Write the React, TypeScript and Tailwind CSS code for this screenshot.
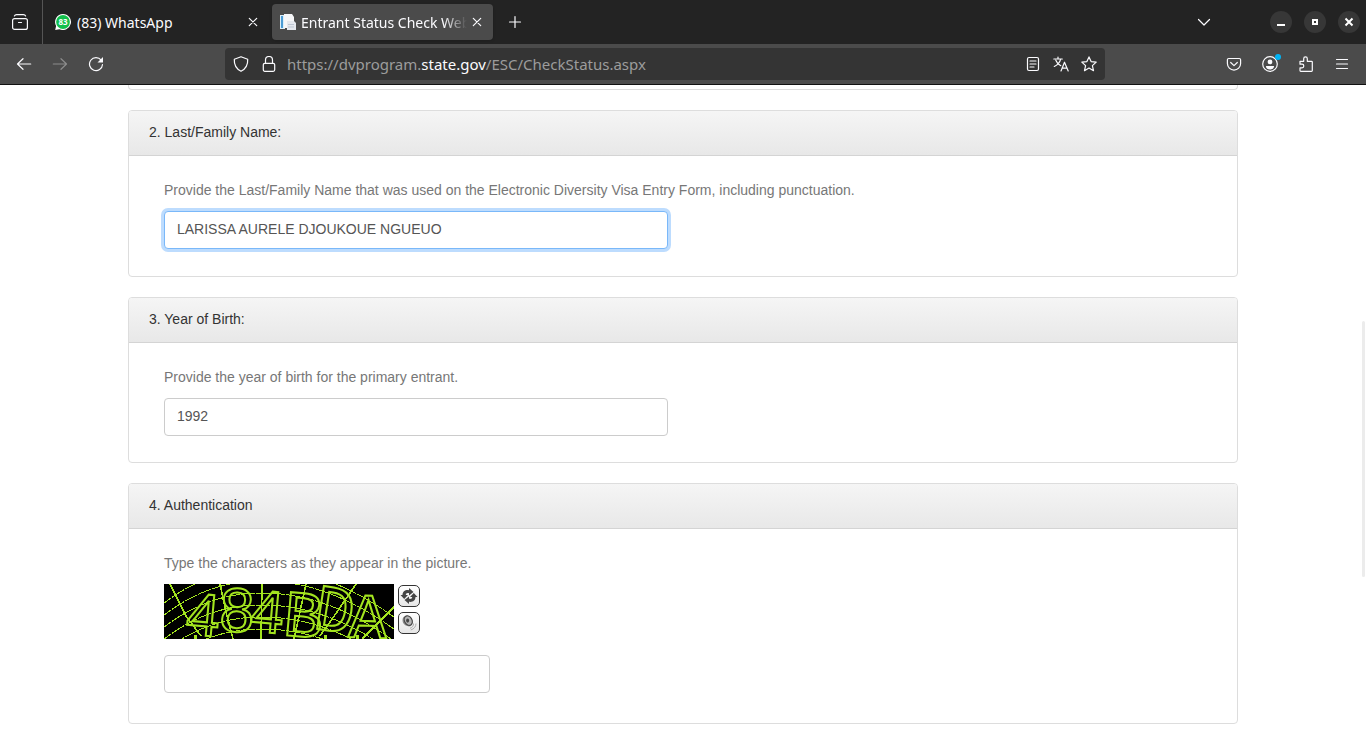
import type { ReactNode } from "react";

type IconProps = { children: ReactNode; className?: string; box?: string };

function Icon({ children, className = "size-4", box = "0 0 16 16" }: IconProps) {
  return (
    <svg viewBox={box} className={className} fill="none" stroke="currentColor" strokeWidth="1.2" strokeLinecap="round" strokeLinejoin="round" aria-hidden="true">
      {children}
    </svg>
  );
}

function IconButton({ label, className, children }: { label: string; className?: string; children: ReactNode }) {
  return (
    <button type="button" aria-label={label} className={`flex shrink-0 items-center justify-center ${className ?? ""}`}>
      {children}
    </button>
  );
}

function CloseIcon() {
  return (
    <Icon className="size-3" box="0 0 12 12">
      <path d="M2.3 2.3l7.4 7.4M9.7 2.3l-7.4 7.4" />
    </Icon>
  );
}

function TabBar() {
  return (
    <div className="flex h-11 items-center bg-[#232323] text-[#fbfbfe]">
      <IconButton label="View recent browsing" className="h-full w-[42px] pr-0.5">
        <Icon className="size-[18px]" box="0 0 18 18">
          <rect x="1.6" y="5.6" width="14.8" height="10.8" rx="2" />
          <path d="M3.4 3c.5-1.200 1-1.400 2.200-1.400h6.800c1.200 0 1.700.2 2.200 1.400M7.500 9.500h3" />
        </Icon>
      </IconButton>
      <div className="h-full w-px bg-[#555]" />
      <div className="flex h-9 w-[224px] items-center pr-1 pl-3">
        <svg viewBox="0 0 16 16" className="size-4 shrink-0" aria-hidden="true">
          <path d="M8 0a8 8 0 1 1-3.600 15.150L.2 16l.9-4A8 8 0 0 1 8 0z" fill="#fff" />
          <circle cx="8" cy="8" r="6.900" fill="#12c04b" />
          <text x="8" y="11" textAnchor="middle" fontSize="8" fontWeight="700" fill="#fff" fontFamily="Open Sans, sans-serif">83</text>
        </svg>
        <span className="ml-1.5 flex-1 truncate pt-0.5 text-sm">(83) WhatsApp</span>
        <IconButton label="Close tab" className="size-5"><CloseIcon /></IconButton>
      </div>
      <div className="ml-[5px] flex h-9 w-[221px] items-center rounded bg-[#4b4b4b] pr-1.5 pl-2 shadow">
        <svg viewBox="0 0 16 16" className="size-4 shrink-0" aria-hidden="true">
          <path d="M0 1h5v14H0z" fill="#d9edf8" />
          <path d="M1 2h2v12H1z" fill="#4a9bd4" />
          <path d="M4 0h8l2 3v11H4z" fill="#f5f6f8" />
          <path d="M7 7h7l2 2v7H7z" fill="#e4e8ee" />
          <path d="M8 10.500h6M8 13h6" stroke="#bcc5d2" />
        </svg>
        <span className="ml-1 min-w-0 flex-1 overflow-hidden pt-0.5 pl-px text-sm whitespace-nowrap [mask-image:linear-gradient(to_right,black_86%,transparent)]">
          Entrant Status Check Web
        </span>
        <IconButton label="Close tab" className="size-5"><CloseIcon /></IconButton>
      </div>
      <IconButton label="New tab" className="ml-1.5 size-8">
        <Icon><path d="M8 2.500v11M2.500 8h11" /></Icon>
      </IconButton>
      <div className="flex-1" />
      <IconButton label="List all tabs" className="mr-[50px] size-8">
        <Icon><path d="M2.500 5.500L8 11l5.500-5.500" /></Icon>
      </IconButton>
      <div className="flex gap-3 pr-1.5">
        <IconButton label="Minimize" className="size-[22px] rounded-full bg-[#373737]">
          <svg viewBox="0 0 16 16" className="size-4" aria-hidden="true"><path d="M4 10h8v2H4z" fill="#fff" /></svg>
        </IconButton>
        <IconButton label="Maximize" className="size-[22px] rounded-full bg-[#373737]">
          <svg viewBox="0 0 16 16" className="size-4" aria-hidden="true"><path d="M6 6h4v4H6z" fill="none" stroke="#fff" strokeWidth="2" /></svg>
        </IconButton>
        <IconButton label="Close window" className="size-[22px] rounded-full bg-[#373737]">
          <svg viewBox="0 0 16 16" className="size-4" aria-hidden="true"><path d="M4.500 4.500l7 7M11.500 4.500l-7 7" stroke="#fff" strokeWidth="2" /></svg>
        </IconButton>
      </div>
    </div>
  );
}

function NavBar() {
  return (
    <div className="flex h-10 items-center bg-[#4b4b4b] text-[#fbfbfe]">
      <div className="flex items-center gap-1 pl-2">
        <IconButton label="Back" className="size-8">
          <Icon><path d="M14.700 8H1.500M7 2.700L1.500 8 7 13.300" /></Icon>
        </IconButton>
        <IconButton label="Forward" className="size-8 text-[#8c8c8c]">
          <Icon><path d="M1.300 8h13.200M9 2.700L14.500 8 9 13.300" /></Icon>
        </IconButton>
        <IconButton label="Reload" className="size-8">
          <Icon>
            <path d="M13.200 4.200A6.500 6.500 0 1 0 14.500 8.500" />
            <path d="M15 1v5.500H9.500z" fill="currentColor" stroke="none" />
          </Icon>
        </IconButton>
      </div>
      <div className="ml-[113px] flex h-8 w-[880px] shrink items-center rounded bg-[#343434] px-2">
        <Icon className="size-4 shrink-0"><path d="M8 .7l6.700 2.500c.3 5-1.500 9.300-6.700 12.100C2.800 12.500 1 8.200 1.300 3.200z" /></Icon>
        <Icon className="ml-3 size-4 shrink-0">
          <rect x="2.300" y="7.300" width="11.400" height="8" rx="1.500" />
          <path d="M4.500 7.300V4a3.500 3.500 0 0 1 7 0v3.300" />
        </Icon>
        <div className="ml-2.5 min-w-0 flex-1 truncate text-[15px] text-[#9c9c9c]">
          https://dvprogram.<span className="text-[#fbfbfe]">state.gov</span>/ESC/CheckStatus.aspx
        </div>
        <div className="flex gap-3">
          <IconButton label="Reader view">
            <Icon><rect x="2.500" y="1.500" width="11" height="13" rx="1.500" /><path d="M5 5h6M5 8h6M5 11h4" /></Icon>
          </IconButton>
          <IconButton label="Translate page">
            <Icon>
              <path d="M.8 3h8.500M5 1v2M7.700 3.200C6.800 6.600 4.500 9 1.300 10.500M2.800 4.200c.8 2.200 2.600 4.300 5 5.500M8 15l3.500-8.800L15.200 15M9.200 12.200h4.800" />
            </Icon>
          </IconButton>
          <IconButton label="Bookmark this page">
            <Icon><path d="M8 .9l2.100 4.700 5.100.5-3.800 3.500 1.100 5.100L8 12.100l-4.500 2.600 1.100-5.100L.8 6.100l5.100-.5z" /></Icon>
          </IconButton>
        </div>
      </div>
      <div className="min-w-2 flex-1" />
      <div className="flex items-center gap-1 pr-2">
        <IconButton label="Save to Pocket" className="size-8">
          <Icon><path d="M2.700 2.500h10.600c.8 0 1.300.5 1.300 1.300v3.700a6.600 6.600 0 0 1-13.200 0V3.800c0-.8.500-1.300 1.300-1.300zM4.700 6.500L8 9.600l3.300-3.100" /></Icon>
        </IconButton>
        <IconButton label="Account" className="relative size-8">
          <Icon>
            <circle cx="8" cy="8" r="7.300" />
            <circle cx="8" cy="5.900" r="2.400" fill="currentColor" stroke="none" />
            <path d="M3.900 10h8.200c0 2.500-2 3.500-4.100 3.500s-4.100-1-4.100-3.500z" fill="currentColor" stroke="none" />
          </Icon>
          <span className="absolute top-1.5 right-[5px] size-1.5 rounded-full bg-[#00b3f4]" />
        </IconButton>
        <IconButton label="Extensions" className="size-8">
          <Icon>
            <path d="M2 5.300h3.700V2.700a1.800 1.800 0 0 1 3.600 0v2.600h4.200c.5 0 .8.300.8.800v8.400c0 .5-.3.800-.8.800H2.800c-.5 0-.8-.3-.8-.8v-2.700h2a1.800 1.800 0 0 0 0-3.600H2z" />
          </Icon>
        </IconButton>
        <IconButton label="Application menu" className="size-8">
          <Icon><path d="M2.500 3.500h11M2.500 8h11M2.500 12.500h11" /></Icon>
        </IconButton>
      </div>
    </div>
  );
}

function Panel({ title, bodyClass, children }: { title: string; bodyClass: string; children: ReactNode }) {
  return (
    <section className="rounded border border-[#ddd] bg-white">
      <h2 className="rounded-t-[3px] border-b border-[#d4d4d4] bg-linear-to-b from-[#f5f5f5] to-[#e8e8e8] px-5 pt-[11px] pb-[13px] text-sm leading-5 text-[#333]">
        {title}
      </h2>
      <div className={`px-[35px] pt-6 ${bodyClass}`}>{children}</div>
    </section>
  );
}

const labelClass = "block pb-[11px] text-sm leading-5 text-[#777]";
const fieldClass =
  "block h-[38px] max-w-full rounded border bg-white px-3 pb-0.5 text-sm text-[#555] outline-none";

const rays = [
  "M6 0L22 32L37 52", "M56 0L62 28L69 55", "M98 0L97 55", "M142 0L130 55",
  "M192 0L173 28L156 52", "M230 23L198 55",
];
const rings = [-18, -6, 6, 18, 30, 42, 54];

const glyphs = [
  { char: "4", x: 21, y: 50, turn: 5, font: "Liberation Sans, sans-serif", size: 60 },
  { char: "8", x: 55, y: 47, turn: 2, font: "Liberation Sans, sans-serif", size: 62 },
  { char: "4", x: 85, y: 47, turn: 5, font: "Liberation Sans, sans-serif", size: 60 },
  { char: "B", x: 118, y: 51, turn: 5, font: "Liberation Mono, monospace", size: 66 },
  { char: "D", x: 148, y: 44, turn: 9, font: "Liberation Mono, monospace", size: 66 },
  { char: "A", x: 184, y: 53, turn: 2, font: "Liberation Mono, monospace", size: 64 },
];

function Captcha() {
  return (
    <svg viewBox="0 0 230 55" className="h-[55px] w-[230px]" role="img" aria-label="Verification characters" fill="none" stroke="#a3e41f">
      <rect width="230" height="55" fill="#000" stroke="none" />
      <g shapeRendering="crispEdges">
        {rings.map((y) => (
          <path key={y} d={`M-4 ${y + 40}C30 ${y + 14} 60 ${y + 3} 98 ${y + 3}S180 ${y + 14} 234 ${y + 54}`} strokeDasharray="14 1" />
        ))}
        {rays.map((d) => <path key={d} d={d} strokeWidth="1.6" />)}
        <path d="M31 51v4M161 51v4M193 51v4" strokeWidth="3" />
      </g>
      {glyphs.map((g) => (
        <text key={g.x} x={g.x} y={g.y} fontFamily={g.font} fontSize={g.size} strokeWidth="2" transform={`rotate(${g.turn} ${g.x} ${g.y})`}>
          {g.char}
        </text>
      ))}
    </svg>
  );
}

function CaptchaButton({ label, children }: { label: string; children: ReactNode }) {
  return (
    <button type="button" aria-label={label} className="flex size-[22px] items-center justify-center rounded-[5px] border border-[#333] bg-linear-to-b from-white to-[#e6e6e6]">
      <svg viewBox="0 0 18 18" className="size-[18px]" aria-hidden="true">{children}</svg>
    </button>
  );
}

export default function App() {
  return (
    <div className="flex h-screen flex-col overflow-hidden bg-white font-['Liberation_Sans',Arial,sans-serif]">
      <header className="shrink-0 border-b border-[#111] font-['Noto_Sans',sans-serif]">
        <TabBar />
        <NavBar />
      </header>
      <main className="relative min-h-0 flex-1 overflow-hidden px-4">
        <form className="mx-auto flex max-w-[1110px] flex-col gap-5">
          <div className="h-[5px] rounded-b border border-t-0 border-[#ddd]" />
          <Panel title="2. Last/Family Name:" bodyClass="pb-[27px]">
            <label htmlFor="family" className={labelClass}>
              Provide the Last/Family Name that was used on the Electronic Diversity Visa Entry Form, including punctuation.
            </label>
            <input
              id="family"
              defaultValue="LARISSA AURELE DJOUKOUE NGUEUO"
              className={`${fieldClass} w-[504px] border-[#7ab8f9] shadow-[0_0_0_3px_#bddcfe]`}
            />
          </Panel>
          <Panel title="3. Year of Birth:" bodyClass="pb-[26px]">
            <label htmlFor="birth-year" className={labelClass}>Provide the year of birth for the primary entrant.</label>
            <input id="birth-year" defaultValue="1992" className={`${fieldClass} w-[504px] border-[#ccc]`} />
          </Panel>
          <Panel title="4. Authentication" bodyClass="pb-[30px]">
            <label htmlFor="characters" className={labelClass}>Type the characters as they appear in the picture.</label>
            <div className="mb-4 flex items-start gap-1">
              <Captcha />
              <div className="flex flex-col gap-[5px] pt-px">
                <CaptchaButton label="Show other characters">
                  <path d="M2.500 8C2.500 4.500 5.500 2.500 9 3.200V1l4.500 4L9 8.500V6.200C7 5.700 5.800 6.500 5.800 8H8L4.200 12 .5 8z" fill="#444" />
                  <path d="M15.500 10c0 3.500-3 5.500-6.500 4.800V17l-4.500-4L9 9.500v2.300c2 .5 3.200-.3 3.200-1.800H10L13.800 6l3.700 4z" fill="#444" />
                </CaptchaButton>
                <CaptchaButton label="Listen to the characters">
                  <path d="M3.500 3c2.500-2.500 6-2 8 1s1 7.500-1.500 8.300c-2 .5-5.700-.8-7-3.500C2.300 7 2.300 4.500 3.500 3z" fill="#8a8a8a" />
                  <ellipse cx="8.300" cy="6.600" rx="3.700" ry="5" transform="rotate(-30 8.300 6.600)" fill="#b5b5b5" stroke="#444" strokeWidth="1.100" />
                  <ellipse cx="7.600" cy="6.600" rx="1.500" ry="2.100" fill="#444" />
                  <path d="M13.500 9.500c.3 2-1 4-3.500 4.800M16 9.500c0 3.200-2 5.300-5.200 6.500" fill="none" stroke="#aaa" />
                </CaptchaButton>
              </div>
            </div>
            <input id="characters" className={`${fieldClass} w-[326px] border-[#ccc]`} />
          </Panel>
        </form>
        <div className="absolute top-[236px] right-px h-64 w-[3px] rounded-full bg-[#ececec]" />
      </main>
    </div>
  );
}
